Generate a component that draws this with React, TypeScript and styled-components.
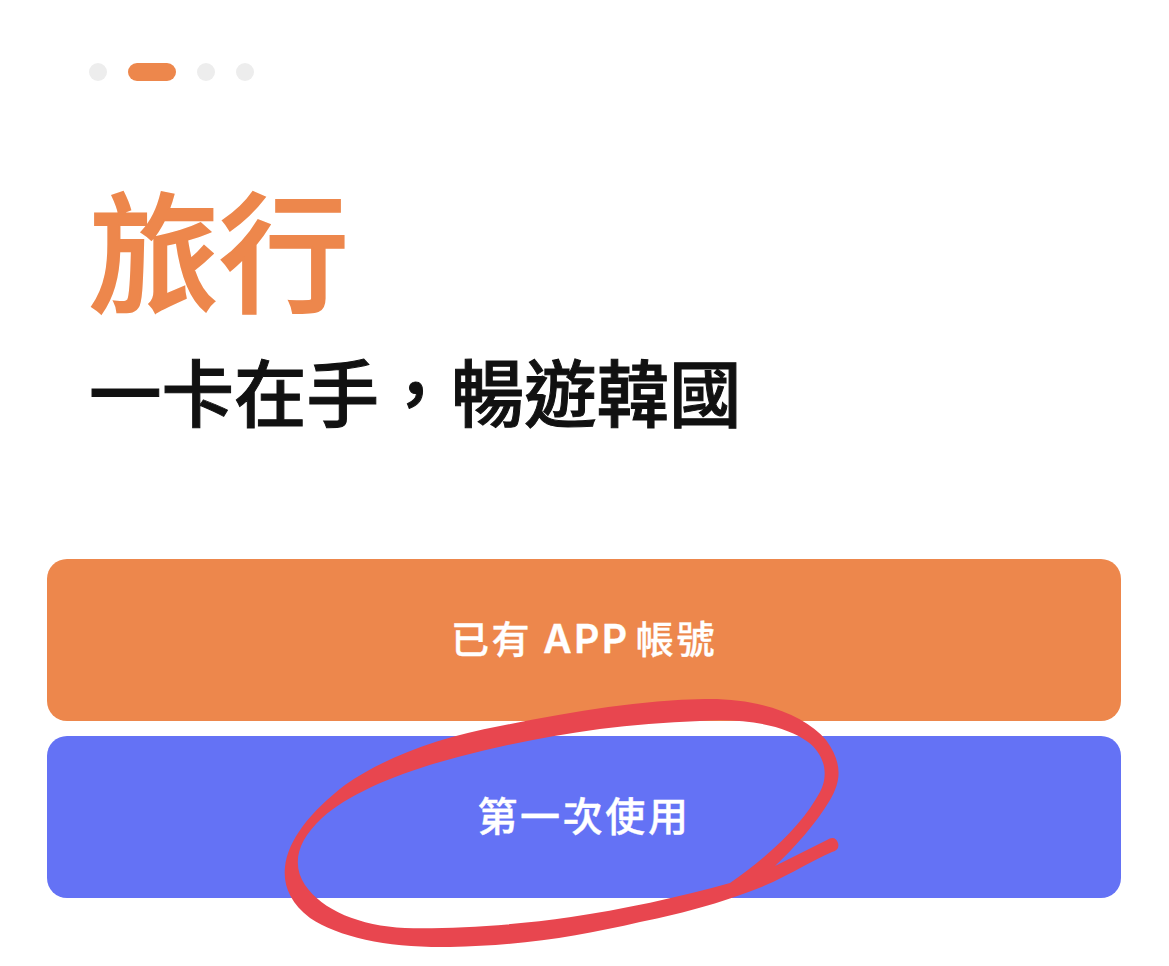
import React from 'react';
import styled, { createGlobalStyle } from 'styled-components';

const GlobalStyle = createGlobalStyle`
  html, body {
    margin: 0;
    padding: 0;
    background: #fff;
  }
  body {
    font-family: "Noto Sans CJK TC", "Inter", sans-serif;
  }
`;

const Page = styled.div`
  position: relative;
  width: 1169px;
  height: 966px;
  overflow: hidden;
  background: #fff;
  padding: 63px 48px 0 47px;
  box-sizing: border-box;
`;

const Intro = styled.div`
  padding-left: 42px;
  display: flex;
  flex-direction: column;
`;

const Steps = styled.div`
  display: flex;
  gap: 21px;
`;

const Step = styled.span<{ $active?: boolean }>`
  width: ${(props) => (props.$active ? '48px' : '18px')};
  height: 18px;
  border-radius: 9px;
  background: ${(props) => (props.$active ? '#ed874c' : '#ededed')};
`;

const Title = styled.h1`
  margin: 79px 0 0;
  font-size: 130px;
  line-height: 170px;
  font-weight: 500;
  -webkit-text-stroke: 2px #ed874c;
  color: #ed874c;
`;

const Subtitle = styled.p`
  margin: 10px 0 0;
  font-size: 72.5px;
  line-height: 100px;
  font-weight: 500;
  -webkit-text-stroke: 1px #111;
  color: #111;
`;

const Actions = styled.div`
  margin-top: 119px;
  display: flex;
  flex-direction: column;
  gap: 15px;
`;

const ActionButton = styled.button<{ $tone: string; $size: number; $spacing: number }>`
  height: 162px;
  border: 0;
  border-radius: 20px;
  background: ${(props) => props.$tone};
  color: #fff;
  font-family: "Noto Sans CJK TC", sans-serif;
  font-size: ${(props) => props.$size}px;
  font-weight: 500;
  letter-spacing: ${(props) => props.$spacing}px;
  -webkit-text-stroke: 0.4px #fff;
  padding: 0 0 7px;
`;

const Latin = styled.span`
  font-family: "Inter", sans-serif;
  font-size: 39px;
  font-weight: 600;
  margin-right: 6px;
`;

const Scribble = styled.svg`
  position: absolute;
  inset: 0;
  pointer-events: none;
`;

const outerStroke = `
  M775 866 L827 840 Q835 835 838 843 Q840 850 832 852
  C810 862 790 874 773 882
  C740 897 690 912 640 922
  C580 936 520 946 450 947
  C390 948 340 938 310 918
  C290 903 283 885 285 867
  C288 840 310 812 345 785
  C385 757 440 737 500 726
  C570 712 640 700 705 699
  C760 698 805 715 826 740
  C842 762 842 780 830 800
  C815 825 795 847 775 866 Z`;

const innerStroke = `
  M730 883
  C680 897 620 910 571 917
  C510 926 450 929 405 928
  C360 926 322 910 305 885
  C292 865 296 842 322 818
  C350 793 400 772 458 757
  C530 738 610 724 700 721
  C745 718 785 725 808 742
  C825 755 829 775 820 792
  C805 820 775 852 730 883 Z`;

export default function App() {
  return (
    <Page>
      <GlobalStyle />
      <Intro>
        <Steps>
          <Step />
          <Step $active />
          <Step />
          <Step />
        </Steps>
        <Title>旅行</Title>
        <Subtitle>一卡在手，暢遊韓國</Subtitle>
      </Intro>
      <Actions>
        <ActionButton $tone="#ed874c" $size={38} $spacing={2.6}>
          已有 <Latin>APP</Latin>帳號
        </ActionButton>
        <ActionButton $tone="#6472f5" $size={40} $spacing={2.6}>
          第一次使用
        </ActionButton>
      </Actions>
      <Scribble width="1169" height="966" viewBox="0 0 1169 966">
        <path d={`${outerStroke} ${innerStroke}`} fill="#e8464f" fillRule="evenodd" />
      </Scribble>
    </Page>
  );
}
